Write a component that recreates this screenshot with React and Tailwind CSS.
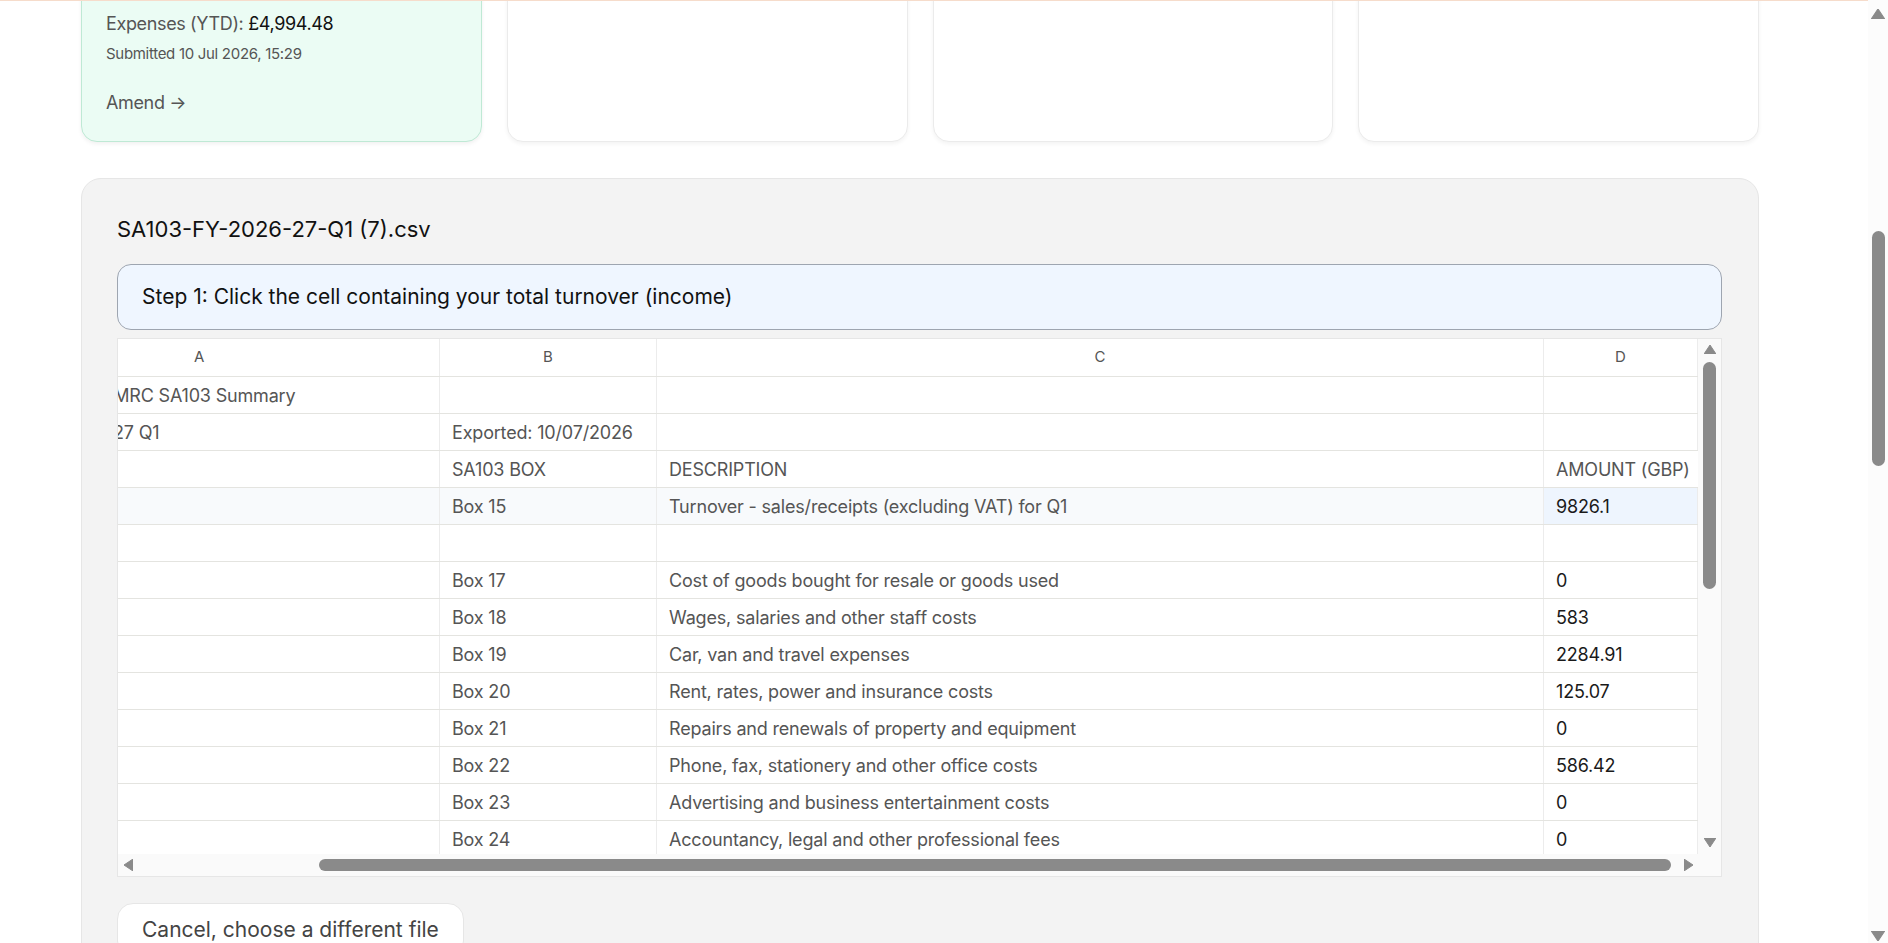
import React from "react"

const FONT = { fontFamily: "Inter, 'Noto Sans', sans-serif" }

const ROWS = [
  { a: "HMRC SA103 Summary", aCls: "ml-[-18px]" },
  { a: "27 Q1", aCls: "ml-[-5px]", b: "Exported: 10/07/2026" },
  { b: "SA103 BOX", c: "DESCRIPTION", d: "AMOUNT (GBP)", muted: true },
  { b: "Box 15", c: "Turnover - sales/receipts (excluding VAT) for Q1", d: "9826.1", hl: true },
  {},
  { b: "Box 17", c: "Cost of goods bought for resale or goods used", d: "0" },
  { b: "Box 18", c: "Wages, salaries and other staff costs", d: "583" },
  { b: "Box 19", c: "Car, van and travel expenses", d: "2284.91" },
  { b: "Box 20", c: "Rent, rates, power and insurance costs", d: "125.07" },
  { b: "Box 21", c: "Repairs and renewals of property and equipment", d: "0" },
  { b: "Box 22", c: "Phone, fax, stationery and other office costs", d: "586.42" },
  { b: "Box 23", c: "Advertising and business entertainment costs", d: "0" },
  { b: "Box 24", c: "Accountancy, legal and other professional fees", d: "0" },
  { b: "Box 25", c: "Interest on bank and other loans", d: "0" },
]

// small scrollbar arrow triangles
const Tri = ({ dir, className }) => {
  const pts = {
    up: "6,0 12,9 0,9",
    down: "0,0 12,0 6,9",
    left: "9,0 9,12 0,6",
    right: "0,0 9,6 0,12",
  }[dir]
  const vb = dir === "up" || dir === "down" ? "0 0 12 9" : "0 0 9 12"
  const size = dir === "up" || dir === "down" ? "w-[12px] h-[9px]" : "w-[9px] h-[12px]"
  return (
    <svg viewBox={vb} className={`${size} shrink-0 ${className || ""}`}>
      <polygon points={pts} fill="#8a8a8a" strokeLinejoin="round" stroke="#8a8a8a" strokeWidth="1" />
    </svg>
  )
}

const SummaryCard = () => (
  <div className="rounded-2xl border border-[#bfe9d5] bg-[#ebfcf4] shadow-[0_2px_4px_rgba(0,0,0,0.06)] px-6 pt-6 pb-6">
    <div className="mb-[5px] text-[18px] leading-7 text-[#555] tracking-[-0.02em]">
      Income (YTD): <span className="text-[#111]">£9,826.10</span>
    </div>
    <div className="text-[18px] leading-7 text-[#555] tracking-[-0.02em]">
      Expenses (YTD): <span className="text-[#111]">£4,994.48</span>
    </div>
    <div className="mt-1 text-[15px] leading-6 text-[#555] tracking-[-0.02em]">
      Submitted 10 Jul 2026, 15:29
    </div>
    <div className="mt-[23px] text-[18px] leading-7 text-[#555] tracking-[-0.02em]">Amend →</div>
  </div>
)

const EmptyCard = () => (
  <div className="rounded-2xl border border-[#ebebeb] bg-white shadow-[0_2px_4px_rgba(0,0,0,0.05)]" />
)

const Sheet = () => (
  <div className="mt-[8px] border border-[#e6e6e6] bg-white flex flex-col">
    <div className="flex h-[515px]">
      <div className="flex-1 min-w-0 overflow-hidden">
        {/* header */}
        <div className="flex h-[38px] border-b border-[#e4e4e0] text-[15px] text-[#555]">
          <div className="w-[322px] shrink-0 border-r border-[#ececec] flex items-center pl-[76px]">A</div>
          <div className="w-[217px] shrink-0 border-r border-[#ececec] flex items-center justify-center">B</div>
          <div className="w-[887px] shrink-0 border-r border-[#ececec] flex items-center justify-center">C</div>
          <div className="flex-1 border-r border-[#ececec] flex items-center justify-center">D</div>
        </div>
        {ROWS.map((r, i) => (
          <div
            key={i}
            className={`flex h-[37px] border-b border-[#e4e4e0] text-[18px] tracking-[-0.01em] ${r.hl ? "bg-[#f8fafc]" : ""}`}
          >
            <div className="w-[322px] shrink-0 border-r border-[#ececec] flex items-center overflow-hidden whitespace-nowrap text-[#555]">
              {r.a && <span className={r.aCls}>{r.a}</span>}
            </div>
            <div className="w-[217px] shrink-0 border-r border-[#ececec] flex items-center px-3 whitespace-nowrap text-[#555]">
              {r.b}
            </div>
            <div className="w-[887px] shrink-0 border-r border-[#ececec] flex items-center px-3 whitespace-nowrap text-[#555]">
              {r.c}
            </div>
            <div
              className={`flex-1 border-r border-[#ececec] flex items-center px-3 whitespace-nowrap ${
                r.muted ? "text-[#555]" : "text-[#1a1a1a]"
              } ${r.hl ? "bg-[#eef5fe]" : ""}`}
            >
              {r.d}
            </div>
          </div>
        ))}
      </div>
      {/* vertical scrollbar */}
      <div className="w-[23px] shrink-0 bg-[#fafafa] flex flex-col items-center">
        <Tri dir="up" className="mt-[6px]" />
        <div className="mt-[8px] w-[13px] h-[227px] rounded-full bg-[#8a8a8a]" />
        <div className="flex-1" />
        <Tri dir="down" className="mb-[7px]" />
      </div>
    </div>
    {/* horizontal scrollbar */}
    <div className="h-[22px] bg-[#fafafa] flex items-center pr-[23px]">
      <Tri dir="left" className="ml-[6px]" />
      <div className="ml-[186px] h-[12px] w-[1352px] rounded-full bg-[#8a8a8a]" />
      <Tri dir="right" className="ml-[13px]" />
    </div>
  </div>
)

export default function App() {
  return (
    <div className="flex h-[943px] overflow-hidden bg-white" style={FONT}>
      <div className="flex-1 min-w-0 overflow-hidden">
        <div className="relative z-10 h-px bg-[#f6dccb]" />
        <div className="mt-[-49px] ml-[81px] w-[1678px]">
          <div className="grid grid-cols-4 gap-[25px]">
            <SummaryCard />
            <EmptyCard />
            <EmptyCard />
            <EmptyCard />
          </div>

          <div className="mt-[36px] rounded-[20px] border border-[#e6e6e6] bg-[#f3f3f3] pl-[35px] pr-[36px] pt-[36px] pb-10">
            <div className="text-[22px] leading-7 text-[#111]">SA103-FY-2026-27-Q1 (7).csv</div>

            <div className="mt-[21px] h-[66px] rounded-[14px] border border-[#9ea5b0] bg-[#eff6ff] px-6 flex items-center">
              <span className="text-[21px] text-[#111]">
                Step 1: Click the cell containing your total turnover (income)
              </span>
            </div>

            <Sheet />

            <button className="mt-[26px] rounded-2xl border border-[#e6e6e6] bg-white px-6 py-3 text-[21px] leading-7 text-[#444]">
              Cancel, choose a different file
            </button>
          </div>
        </div>
      </div>

      {/* page scrollbar */}
      <div className="w-[20px] shrink-0 bg-[#fcfcfc] flex flex-col items-center">
        <Tri dir="up" className="mt-[9px] w-[14px] h-[10px]" />
        <div className="mt-[212px] w-[13px] h-[235px] rounded-full bg-[#8a8a8a]" />
        <div className="flex-1" />
        <Tri dir="down" className="mb-[2px] w-[14px] h-[10px]" />
      </div>
    </div>
  )
}
